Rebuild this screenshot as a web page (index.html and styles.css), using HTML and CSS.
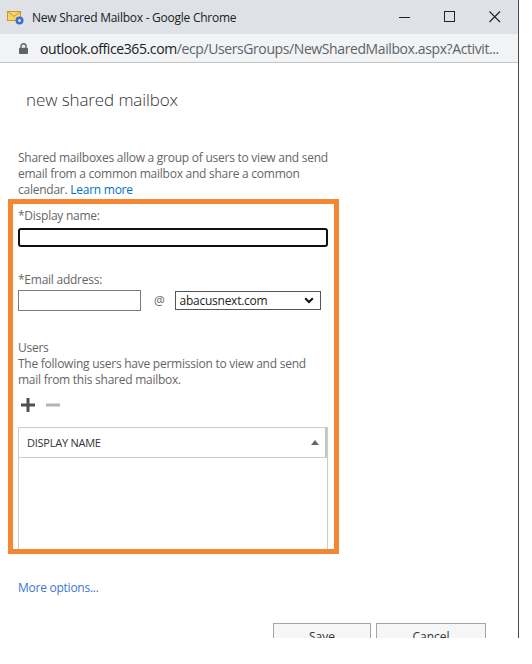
FILE: index.html
```html
<!DOCTYPE html>
<html lang="en">
<head>
    <meta charset="UTF-8">
    <title>New Shared Mailbox - Google Chrome</title>
    <link rel="stylesheet" href="styles.css">
</head>
<body>
    <div class="window">
        <div class="titlebar">
            <svg class="app-icon" width="18" height="16" viewBox="0 0 18 16">
                <rect x="0.5" y="2.5" width="13" height="9" fill="#f6d36b" stroke="#c79a2c"/>
                <path d="M0.5 2.5 L7 7.5 L13.5 2.5" fill="none" stroke="#c79a2c"/>
                <circle cx="12.5" cy="11.5" r="4" fill="#3d6fd1"/>
                <circle cx="12.5" cy="11.5" r="1.5" fill="#cfe0ff"/>
            </svg>
            <span class="title">New Shared Mailbox - Google Chrome</span>
            <div class="controls">
                <div class="control">
                    <svg width="12" height="12" viewBox="0 0 12 12"><path d="M0 6.5 H11" stroke="#202124" stroke-width="1"/></svg>
                </div>
                <div class="control">
                    <svg width="12" height="12" viewBox="0 0 12 12"><rect x="0.5" y="0.5" width="10" height="10" fill="none" stroke="#202124"/></svg>
                </div>
                <div class="control">
                    <svg width="12" height="12" viewBox="0 0 12 12"><path d="M0.5 0.5 L11 11 M11 0.5 L0.5 11" stroke="#202124" stroke-width="1.1"/></svg>
                </div>
            </div>
        </div>
        <div class="addressbar">
            <svg class="lock" width="9" height="11" viewBox="0 0 9 11">
                <path d="M2 5 V3.3 a2.5 2.5 0 0 1 5 0 V5" fill="none" stroke="#5f6368" stroke-width="1.4"/>
                <rect x="0" y="4.8" width="9" height="6.2" rx="0.8" fill="#5f6368"/>
            </svg>
            <span class="url"><span class="host">outlook.office365.com</span>/ecp/UsersGroups/NewSharedMailbox.aspx?Activit...</span>
        </div>

        <div class="page">
            <h1 class="heading">new shared mailbox</h1>
            <p class="intro">Shared mailboxes allow a group of users to view and send email from a common mailbox and share a common calendar. <a href="#">Learn more</a></p>

            <div class="highlight">
                <label class="label">*Display name:</label>
                <input type="text" class="field field-wide">

                <label class="label label-email">*Email address:</label>
                <div class="email-row">
                    <input type="text" class="field field-alias">
                    <span class="at">@</span>
                    <div class="domain-select">
                        <span>abacusnext.com</span>
                        <svg width="10" height="7" viewBox="0 0 10 7"><path d="M1.2 1.2 L5 5 L8.8 1.2" fill="none" stroke="#111" stroke-width="2"/></svg>
                    </div>
                </div>

                <div class="users-title">Users</div>
                <p class="users-text">The following users have permission to view and send mail from this shared mailbox.</p>

                <div class="toolbar">
                    <svg width="16" height="16" viewBox="0 0 16 16"><path d="M8 1 V15 M1 8 H15" stroke="#505050" stroke-width="3"/></svg>
                    <svg width="16" height="16" viewBox="0 0 16 16"><path d="M1 8 H15" stroke="#b4b4b4" stroke-width="3"/></svg>
                </div>

                <div class="grid">
                    <div class="grid-header">
                        <span>DISPLAY NAME</span>
                        <svg width="8" height="5" viewBox="0 0 8 5"><path d="M0 5 L4 0 L8 5 Z" fill="#666"/></svg>
                    </div>
                    <div class="grid-body"></div>
                </div>
            </div>

            <a href="#" class="more">More options...</a>

            <div class="buttons">
                <button class="btn btn-save">Save</button>
                <button class="btn btn-cancel">Cancel</button>
            </div>
        </div>
    </div>
</body>
</html>
```

FILE: styles.css
```css
body {
    margin: 0;
    background-color: #fff;
    font-family: "Open Sans", "Noto Sans", sans-serif;
    letter-spacing: -0.25px;
}
.window {
    width: 519px;
    height: 638px;
    box-sizing: border-box;
    border-right: 1px solid #4a4a4a;
    overflow: hidden;
}
.titlebar {
    height: 34px;
    background-color: #dee1e6;
    display: flex;
    align-items: center;
    padding-left: 7px;
}
.app-icon {
    margin-right: 7px;
    flex-shrink: 0;
}
.title {
    font-size: 12px;
    color: #202124;
}
.controls {
    margin-left: auto;
    display: flex;
    margin-right: 1px;
}
.control {
    width: 45px;
    height: 34px;
    display: flex;
    align-items: center;
    justify-content: center;
}
.addressbar {
    height: 28px;
    background-color: #f1f3f4;
    border-bottom: 1px solid #c4c4c4;
    display: flex;
    align-items: center;
    padding-left: 19px;
    overflow: hidden;
}
.lock {
    margin-right: 12px;
    flex-shrink: 0;
}
.url {
    font-size: 14px;
    letter-spacing: -0.4px;
    color: #5f6368;
    white-space: nowrap;
}
.url .host {
    color: #202124;
}
.page {
    padding-left: 18px;
}
.heading {
    margin: 25px 0 0 8px;
    font-size: 17px;
    font-weight: 300;
    line-height: 24px;
    letter-spacing: -0.1px;
    color: #333;
}
.intro {
    margin: 38px 0 0;
    width: 312px;
    font-size: 12px;
    line-height: 16px;
    color: #666;
}
.intro a,
.more {
    color: #0072c6;
    text-decoration: none;
}
.highlight {
    margin: 1px 0 0 -10px;
    width: 331px;
    height: 355px;
    box-sizing: border-box;
    border: 5px solid #f58634;
    padding: 4px 6px 0 5px;
    overflow: hidden;
}
.label {
    display: block;
    font-size: 12px;
    line-height: 16px;
    color: #666;
}
.field {
    display: block;
    box-sizing: border-box;
    margin: 4px 0 0;
    font-family: inherit;
    background-color: #fff;
}
.field-wide {
    width: 310px;
    height: 19px;
    border: 2px solid #111;
    border-radius: 3px;
}
.label-email {
    margin-top: 25px;
}
.email-row {
    display: flex;
    align-items: center;
    margin-top: 2px;
}
.field-alias {
    width: 123px;
    height: 21px;
    border: 1px solid #7a7a7a;
    margin: 0;
}
.at {
    margin: 0 10px 0 13px;
    font-size: 12px;
    color: #666;
}
.domain-select {
    width: 146px;
    height: 19px;
    box-sizing: border-box;
    border: 1px solid #555;
    display: flex;
    align-items: center;
    justify-content: space-between;
    padding: 0 6px 0 4px;
    font-size: 12px;
    color: #222;
}
.users-title {
    margin-top: 29px;
    font-size: 12px;
    line-height: 16px;
    color: #666;
}
.users-text {
    margin: 0;
    width: 300px;
    font-size: 12px;
    line-height: 16px;
    color: #666;
}
.toolbar {
    display: flex;
    gap: 9px;
    margin: 9px 0 0 2px;
    height: 16px;
}
.grid {
    margin-top: 14px;
    width: 310px;
    box-sizing: border-box;
    border: 1px solid #ccc;
    border-bottom: none;
}
.grid-header {
    height: 29px;
    border-bottom: 1px solid #ccc;
    border-right: 2px solid #c4c4c4;
    display: flex;
    align-items: center;
    justify-content: space-between;
    padding: 0 6px 0 8px;
    font-size: 11px;
    color: #333;
}
.grid-body {
    height: 100px;
}
.more {
    display: block;
    margin-top: 26px;
    font-size: 12px;
    line-height: 16px;
    color: #3a78d4;
}
.buttons {
    display: flex;
    gap: 5px;
    margin: 27px 0 0 255px;
}
.btn {
    height: 26px;
    background-color: #f6f6f6;
    border: 1px solid #a0a6a9;
    font-family: inherit;
    font-size: 12px;
    color: #333;
    padding: 0;
}
.btn-save {
    width: 98px;
}
.btn-cancel {
    width: 110px;
}
```
